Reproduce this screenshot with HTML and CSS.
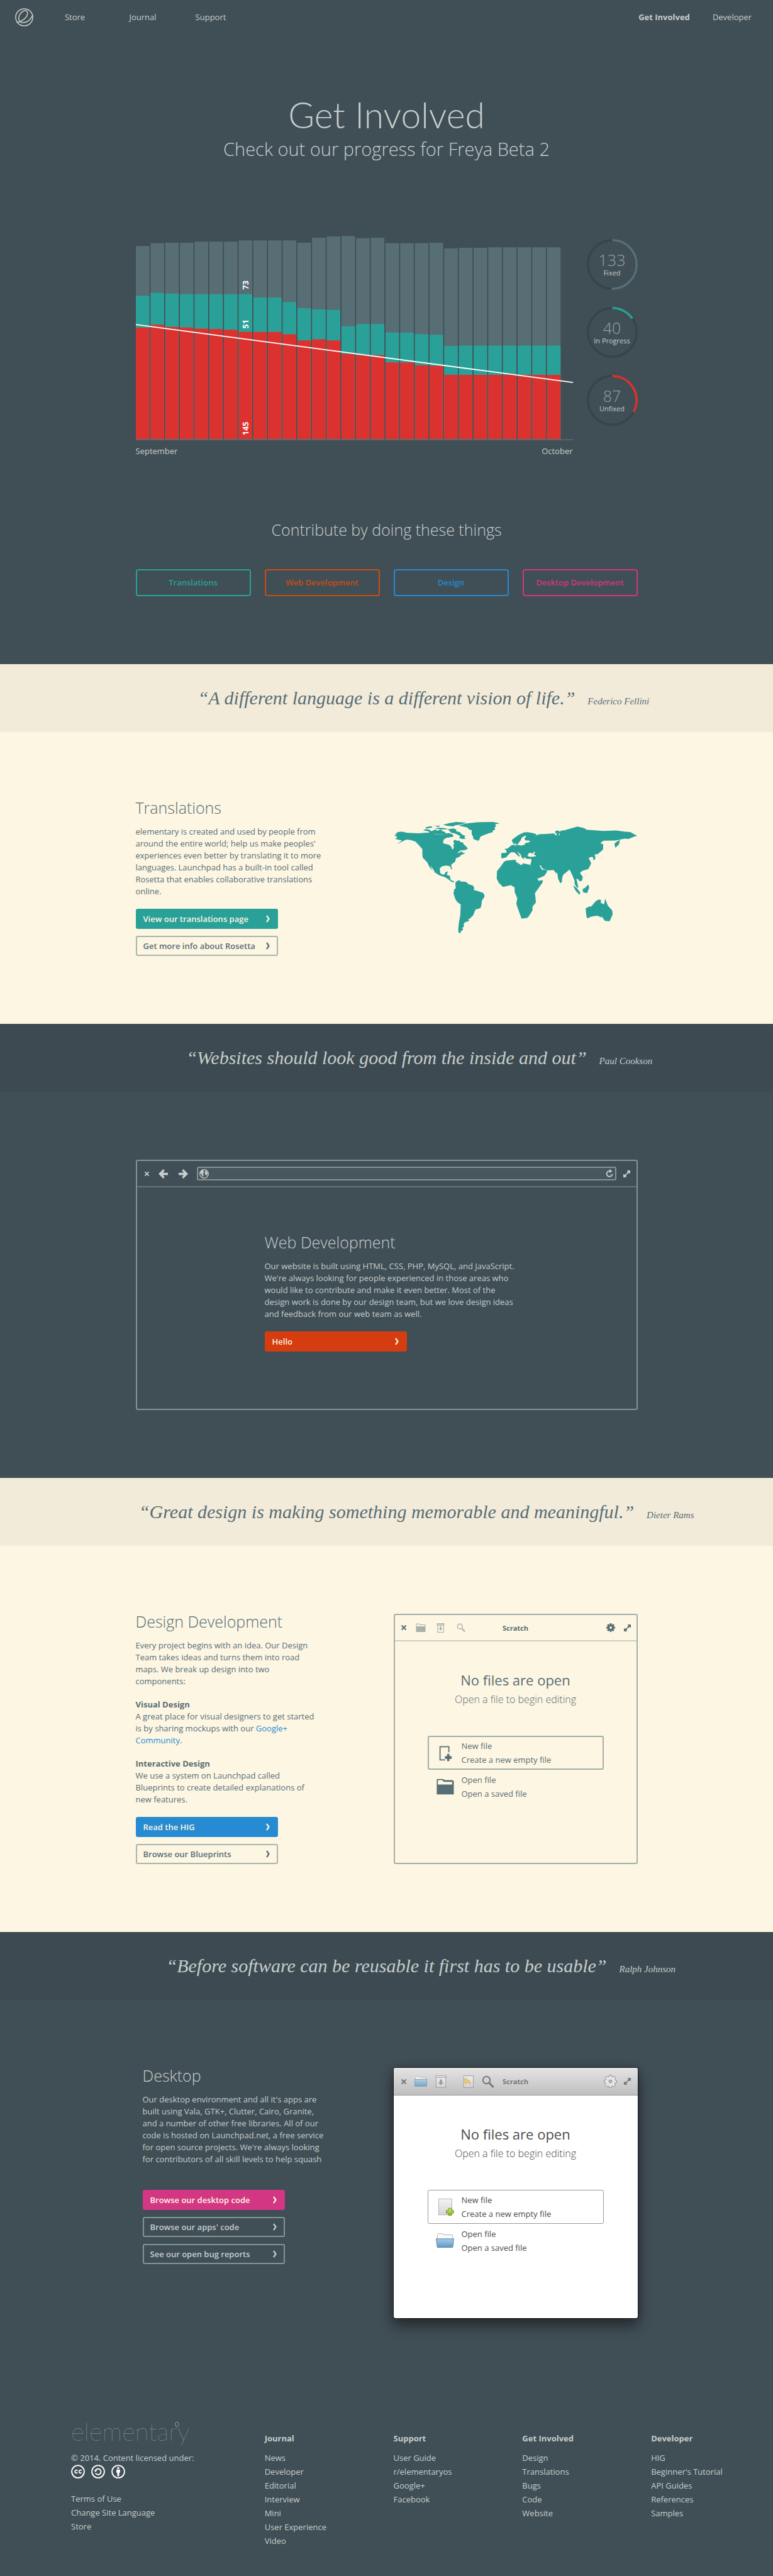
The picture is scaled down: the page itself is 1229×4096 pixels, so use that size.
FILE: index.html
```html
<!DOCTYPE html>
<html lang="en">
<head>
<meta charset="utf-8">
<meta name="viewport" content="width=device-width, initial-scale=1">
<title>Get Involved - elementary</title>
<link rel="stylesheet" href="styles.css">
</head>
<body>
<svg class="sprite" aria-hidden="true">
  <symbol id="chevron" viewBox="0 0 8 12"><path d="M2 1l3.500 5L2 11" fill="none" stroke="currentColor" stroke-width="2.200"/></symbol>
  <symbol id="close" viewBox="0 0 10 10"><path d="M1.500 1.500l7 7M8.500 1.500l-7 7" stroke="currentColor" stroke-width="2" fill="none"/></symbol>
  <symbol id="expand" viewBox="0 0 12 12"><path d="M6 0h6v6L10 4 7.500 6.500 5.500 4.500 8 2zM0 12V6l2 2 2.500-2.500 2 2L4 10l2 2z" fill="currentColor"/></symbol>
  <symbol id="arrow" viewBox="0 0 16 16"><path d="M0 8l8-8 2.500 2.500L7.500 6H16v4H7.500l3 3.500L8 16z" fill="currentColor"/></symbol>
  <symbol id="globe" viewBox="0 0 16 16"><circle cx="8" cy="8" r="7.300" fill="none" stroke="currentColor" stroke-width="1.400"/><path d="M2 4l3-2.500L8 3 6.500 5 8 6.500 5.500 8 7.500 10l-2 3.500L4 9 1.500 7zM10 2.500l3 1.500 1 4-2 3.500-2-3L9 6z" fill="currentColor"/></symbol>
  <symbol id="reload" viewBox="0 0 16 16"><path d="M8 3.500a5 5 0 1 0 5 5.500" fill="none" stroke="currentColor" stroke-width="2.200"/><path d="M8 0l5 3.700-5 3.500z" fill="currentColor"/></symbol>
  <symbol id="folder" viewBox="0 0 32 28"><path d="M1 28V1h10l2 3h18v24z" fill="currentColor"/><path d="M3 10V3h7l2 3h17v4z" class="paper"/></symbol>
  <symbol id="save" viewBox="0 0 16 20"><path d="M0 0h16v4h-1v16H1V4H0zM1.500 1.500v1h13v-1zM2.500 4.500v14h11v-14z" fill="currentColor" fill-rule="evenodd"/><path d="M6.500 6h3v5H12l-4 4.500L4 11h2.500z" fill="currentColor"/></symbol>
  <symbol id="search" viewBox="0 0 20 20"><circle cx="7.500" cy="7.500" r="5.700" fill="none" stroke="currentColor" stroke-width="2"/><path d="M11.500 11.500L18.500 19" stroke="currentColor" stroke-width="3"/></symbol>
  <symbol id="gear" viewBox="0 0 20 20"><circle cx="10" cy="10" r="5.200" fill="none" stroke="currentColor" stroke-width="5"/><path d="M10 0v4M10 16v4M0 10h4M16 10h4M3 3l3 3M14 14l3 3M17 3l-3 3M6 14l-3 3" stroke="currentColor" stroke-width="4"/></symbol>
</svg>

<header class="topbar">
  <a class="logo" href="#" aria-label="elementary">
    <svg viewBox="48 42 96 96" width="29" height="29"><g fill="none" stroke="currentColor" stroke-width="5"><circle cx="96" cy="90" r="45"/><path d="M56 117C86 114 118 87 113 64C109 49 88 53 75 72C60 95 68 119 92 118C115 116 132 99 141 78"/></g></svg>
  </a>
  <nav class="topnav" aria-label="Main"><a href="#">Store</a><a href="#">Journal</a><a href="#">Support</a></nav>
  <nav class="topnav topnav-end" aria-label="Community"><a href="#" class="current">Get Involved</a><a href="#">Developer</a></nav>
</header>

<main>
<section class="hero wrap">
  <h1>Get Involved</h1>
  <p class="lead">Check out our progress for Freya Beta 2</p>
  <div class="progress">
    <div class="chart">
      <svg viewBox="240 410 774 370" role="img" aria-label="Bugs fixed, in progress and unfixed per day">
        <g fill="none" stroke-width="24">
          <path stroke="#586e75" d="M252 436V778M278 431V778M304 430V778M330 430V778M356 428V778M382 428V778M408 428V778M434 426V778M460 426V778M486 426V778M512 426V778M538 430V778M564 421V778M590 419V778M616 418V778M642 422V778M668 421V778M694 431V778M720 431V778M746 431V778M772 430V778M798 440V778M824 439V778M850 439V778M876 438V778M902 438V778M928 438V778M954 438V778M980 438V778"/>
          <path stroke="#2aa198" d="M252 524V778M278 519V778M304 520V778M330 521V778M356 521V778M382 521V778M408 521V778M434 521V778M460 527V778M486 527V778M512 535V778M538 546V778M564 548V778M590 549V778M616 578V778M642 574V778M668 574V778M694 589V778M720 589V778M746 592V778M772 593V778M798 613V778M824 612V778M850 612V778M876 612V778M902 612V778M928 612V778M954 612V778M980 612V778"/>
          <path stroke="#dc322f" d="M252 580V778M278 575V778M304 579V778M330 580V778M356 582V778M382 583V778M408 584V778M434 588V778M460 588V778M486 588V778M512 592V778M538 603V778M564 601V778M590 603V778M616 627V778M642 629V778M668 629V778M694 642V778M720 642V778M746 647V778M772 648V778M798 664V778M824 664V778M850 664V778M876 664V778M902 664V778M928 664V778M954 664V778M980 664V778"/>
        </g>
        <path d="M240 575L1014 677.500" stroke="#fff" stroke-width="2"/>
        <path d="M240 779H1014" stroke="#586e75" stroke-width="2"/>
        <g class="bar-value">
          <text transform="translate(439 513) rotate(-90)">73</text>
          <text transform="translate(439 582) rotate(-90)">51</text>
          <text transform="translate(439 771) rotate(-90)">145</text>
        </g>
      </svg>
      <div class="axis"><span>September</span><span>October</span></div>
    </div>
    <div class="rings">
      <div class="ring"><svg viewBox="0 0 90 90"><circle cx="45" cy="45" r="43"/><circle class="arc" cx="45" cy="45" r="43" pathLength="100" stroke-dasharray="50.500 100"/></svg><strong>133</strong><span>Fixed</span></div>
      <div class="ring"><svg viewBox="0 0 90 90"><circle cx="45" cy="45" r="43"/><circle class="arc" cx="45" cy="45" r="43" pathLength="100" stroke-dasharray="15.400 100"/></svg><strong>40</strong><span>In Progress</span></div>
      <div class="ring"><svg viewBox="0 0 90 90"><circle cx="45" cy="45" r="43"/><circle class="arc" cx="45" cy="45" r="43" pathLength="100" stroke-dasharray="33 100"/></svg><strong>87</strong><span>Unfixed</span></div>
    </div>
  </div>
  <h2 class="contribute">Contribute by doing these things</h2>
  <nav class="jump" aria-label="Ways to contribute">
    <a class="teal" href="#translations">Translations</a>
    <a class="orange" href="#web">Web Development</a>
    <a class="blue" href="#design">Design</a>
    <a class="pink" href="#desktop">Desktop Development</a>
  </nav>
</section>

<blockquote class="quote light"><p>“A different language is a different vision of life.”</p><cite>Federico Fellini</cite></blockquote>
<section class="panel light" id="translations">
  <div class="wrap split">
    <div class="copy">
      <h2>Translations</h2>
      <p>elementary is created and used by people from around the entire world; help us make peoples' experiences even better by translating it to more languages. Launchpad has a built-in tool called Rosetta that enables collaborative translations online.</p>
      <div class="actions">
        <a class="btn solid teal" href="#">View our translations page<svg><use href="#chevron"/></svg></a>
        <a class="btn" href="#">Get more info about Rosetta<svg><use href="#chevron"/></svg></a>
      </div>
    </div>
    <svg class="map" viewBox="18 24 1296 604" role="img" aria-label="World map" fill="#2aa198" fill-rule="evenodd">
      <path d="M20 95l18-5-6-4 28-4 30 6 60 3 30-3 35-1 25 9 50-1 20-6 20 8 6 8-6 5-32 5-14 8-5 15 6 8 25 5 14 11 3 12 6 2 4-12-3-10 5-8-5-13 7-8 15 6 8-3 8 9 14 3 4 10 10 8 11 13-6 6-13 3-20 2-15 12 5 2 18-10 4 8 14 3-24 10-6 8-20 9-4 18-20 14 0 12 5 14-5 0-8-17-20-3-22 4-12 12 3 25 15 8 10-5 3-10 12-2-5 18 17 5 1 18 13 10 8-2-4 9-10-4-15-12-20-12-30-10-25-16-4-12-20-25 8 18 7 13-18-22-12-25-24-25-2-18 0-26-6-8-30-33-25-8-25-3-50 25 28-20-36-8 12-10-16-7 12-7z"/>
      <path d="M185 60l30-8 10 8-34 6zM174 75l12-6 20 2 12 9 20-9 12 6 20-7 4 8 16 5 4 8 16 1-15 5-30-2-20 0-25-3-10-2-6-9zM280 46l30-9 40-6 54 3-30 10-30 4-10 6-34-3zM235 52l30-3-10 8zM235 66l25-5 30 3 20 4-30 3zM306 70l28-5 18 6-4 8 20 5 14 14 18 7-8 5 8 10-18 1-18-6 8-8-12-8-20-8-16-3zM363 50l37-11 60-7 85-1 36 6-24 6 4 12-8 6 4 10-12 5-2 9-18 5-18 7-14 5-14 6-9 22-12-2-18-8 0-10-8-14 0-22-12-2-12-12z"/>
      <path d="M345 352l10-8 13-4 4 6 30 3 15 13 22 6 7 14-4 10 10 2 38 12 9 10 1 12-14 20-2 20-4 18-10 5-18 5-4 10-8 20-20 20-6-1 4 12-20 6-8 7 0 18-8 5 5 10-10 6-6 13-10-5 0-24 4-34 6-30 3-60-18-12-10-15-11-32 4-20 8-8z"/>
      <path d="M645 126l35-26 30-14 20-1 25 4 22 7-8 7 25-8 20 0 50-3 14 2-2-16 14-2 8 6 14-6 12-1 70-20 38 9 8 8 90 6 70-2 40 6 34 2 37 20-18 5-28 12-20-2-50 10-63 1-17 13 16 7-2 28-26 22-19 4 5 12-2 14-10 2 0-14-12-2-12 8 10 16 3 12-14 28-33 10-12 12 15 20-4 20-12 4-10-12-8-2 6 26 5 22-8-2-12-17-1-20-12-28-14-30-10 8-24 20-6 18 0 18-9 10-12-25-5-32-6 4-12-18-30 2-20-4-14-10-4-12-8 0 8 14 8 10 12-6 14 12-16 24-30 14-12 3-33-70 4-18 3-17-28-2-10-10-3 13-12-10-5-16-20-16 16 24-4 4-27-24-18 2-14 14-10 12-18 5-8-2 0-26 28-2-1-12-10-8 18-3 18-16 20-6-10-5-4-8zM728 211l8-16 14-1 2 7 14-15 2 9-8 5 16 12-20 3-14 1z"/>
      <path class="sea" d="M658 157l4-12 6-6-4 12 10 1 18-24 6-14 16-10 8 2-10 14 6 8 24 2-4 8-20 4-6 10-16 4-18-3zM872 97l12-8-2 14zM892 99l8-10-2 13z"/>
      <path d="M605 240l15-5 45-4 3 12 28 17 8-10 38 8 10 22 27 45 7 18 25-3-4 14-39 55 3 25 2 24-18 22 0 20-16 26-10 13-32 5-12-32-16-46 5-30-14-34 0-24-20-12-42 10-22-22-11-22 1-40 20-25zM1190 146l12-10 18-11-6 25-19 18zM970 367l18 12 20 26-3 12-20-20zM1020 388l15-8 16-18 5 18-11 28-20-3zM1037 490l14-8 17-4 22-26 15-10 15 4-3 14 18 8 6-30 14 37 23 25 3 20-16 38-25-2-12-15-4-8-4 5-20-10-30 5-25 10-4-15z"/>
    </svg>
  </div>
</section>

<blockquote class="quote dark"><p>“Websites should look good from the inside and out”</p><cite>Paul Cookson</cite></blockquote>
<section class="panel dark" id="web">
  <div class="wrap">
    <div class="window browser">
      <div class="toolbar">
        <button class="tool small" aria-label="Close"><svg width="9" height="9"><use href="#close"/></svg></button>
        <button class="tool" aria-label="Back"><svg width="17" height="15"><use href="#arrow"/></svg></button>
        <button class="tool" aria-label="Forward"><svg class="flip" width="17" height="15"><use href="#arrow"/></svg></button>
        <label class="address"><svg width="15" height="15"><use href="#globe"/></svg><input type="text" aria-label="Address"><svg width="14" height="14"><use href="#reload"/></svg></label>
        <button class="tool small" aria-label="Maximize"><svg width="11" height="11"><use href="#expand"/></svg></button>
      </div>
      <div class="page">
        <h2>Web Development</h2>
        <p>Our website is built using HTML, CSS, PHP, MySQL, and JavaScript. We're always looking for people experienced in those areas who would like to contribute and make it even better. Most of the design work is done by our design team, but we love design ideas and feedback from our web team as well.</p>
        <div class="actions"><a class="btn solid orange" href="#">Hello<svg><use href="#chevron"/></svg></a></div>
      </div>
    </div>
  </div>
</section>

<blockquote class="quote light"><p>“Great design is making something memorable and meaningful.”</p><cite>Dieter Rams</cite></blockquote>
<section class="panel light" id="design">
  <div class="wrap split">
    <div class="copy narrow">
      <h2>Design Development</h2>
      <p>Every project begins with an idea. Our Design Team takes ideas and turns them into road maps. We break up design into two components:</p>
      <h3>Visual Design</h3>
      <p>A great place for visual designers to get started is by sharing mockups with our <a href="#">Google+ Community</a>.</p>
      <h3>Interactive Design</h3>
      <p>We use a system on Launchpad called Blueprints to create detailed explanations of new features.</p>
      <div class="actions">
        <a class="btn solid blue" href="#">Read the HIG<svg><use href="#chevron"/></svg></a>
        <a class="btn" href="#">Browse our Blueprints<svg><use href="#chevron"/></svg></a>
      </div>
    </div>
    <div class="window wire">
      <div class="toolbar titled">
        <div class="tools">
          <button class="tool small" aria-label="Close"><svg width="10" height="10"><use href="#close"/></svg></button>
          <button class="tool faded" aria-label="Open"><svg width="16" height="14"><use href="#folder"/></svg></button>
          <button class="tool faded" aria-label="Save"><svg width="13" height="15"><use href="#save"/></svg></button>
          <button class="tool faded" aria-label="Find"><svg width="14" height="14"><use href="#search"/></svg></button>
        </div>
        <span class="title">Scratch</span>
        <div class="tools end">
          <button class="tool" aria-label="Settings"><svg width="14" height="14"><use href="#gear"/></svg></button>
          <button class="tool small" aria-label="Maximize"><svg width="11" height="11"><use href="#expand"/></svg></button>
        </div>
      </div>
      <div class="welcome">
        <h3>No files are open</h3>
        <p>Open a file to begin editing</p>
        <button class="choice first"><svg viewBox="0 0 32 32"><path d="M23 15V5H7v24h9" fill="none" stroke="currentColor" stroke-width="2"/><path d="M20 18h4v4h4v5h-4v4h-4v-4h-4v-5h4z" fill="currentColor"/></svg><span>New file</span><span>Create a new empty file</span></button>
        <button class="choice"><svg viewBox="0 0 32 32"><path d="M1 30V4q0-2 2-2h9q2 0 3 2h14q3 0 3 3v23z" fill="currentColor"/><path d="M3 12V5l1-1h7l3 3h15v5z" class="paper"/></svg><span>Open file</span><span>Open a saved file</span></button>
      </div>
    </div>
  </div>
</section>

<blockquote class="quote dark"><p>“Before software can be reusable it first has to be usable”</p><cite>Ralph Johnson</cite></blockquote>
<section class="panel dark" id="desktop">
  <div class="wrap split">
    <div class="copy inset">
      <h2>Desktop</h2>
      <p>Our desktop environment and all it's apps are built using Vala, GTK+, Clutter, Cairo, Granite, and a number of other free libraries. All of our code is hosted on Launchpad.net, a free service for open source projects. We're always looking for contributors of all skill levels to help squash</p>
      <div class="actions">
        <a class="btn solid pink" href="#">Browse our desktop code<svg><use href="#chevron"/></svg></a>
        <a class="btn" href="#">Browse our apps' code<svg><use href="#chevron"/></svg></a>
        <a class="btn" href="#">See our open bug reports<svg><use href="#chevron"/></svg></a>
      </div>
    </div>
    <div class="window native">
      <svg class="sprite" aria-hidden="true"><defs>
        <linearGradient id="gBlue" x2="0" y2="1"><stop offset="0" stop-color="#a9cbe4"/><stop offset="1" stop-color="#5b9bc9"/></linearGradient>
        <linearGradient id="gGray" x2="0" y2="1"><stop offset="0" stop-color="#f4f4f4"/><stop offset="1" stop-color="#d6d6d6"/></linearGradient>
        <linearGradient id="gGreen" x2="0" y2="1"><stop offset="0" stop-color="#d9f06a"/><stop offset="1" stop-color="#7db71c"/></linearGradient>
        <symbol id="folder-color" viewBox="0 0 32 26"><path d="M2.500 10V3q0-1 1-1h0q0-1.500 1.500-1.500h7q1.500 0 1.500 2h15q1 0 1 1V10" fill="#fafafa" stroke="#b0b0b0"/><path d="M.5 9.500h31L29.500 24.500h-27z" fill="url(#gBlue)" stroke="#4f7f9f"/></symbol>
      </defs></svg>
      <div class="toolbar titled">
        <div class="tools">
          <button class="tool small" aria-label="Close"><svg width="10" height="10"><use href="#close"/></svg></button>
          <button class="tool pale" aria-label="Open"><svg width="20" height="17" viewBox="0 0 22 18"><path d="M1.500 6V2.500l1-2h6l1 1.500h11V6" fill="#fafafa" stroke="#aaa"/><path d="M.5 5.500h21v12H.5z" fill="url(#gBlue)" stroke="#5e87a3"/></svg></button>
          <button class="tool pale" aria-label="Save"><svg width="18" height="20" viewBox="0 0 20 22"><path d="M1.500 3.500h17v18h-17z" fill="url(#gGray)" stroke="#888"/><path d="M.5.5h19v3H.5z" fill="#eee" stroke="#888"/><path d="M8 7h4v5h3l-5 5-5-5h3z" fill="#8a8a8a"/></svg></button>
          <button class="tool pale apart" aria-label="Revert"><svg width="18" height="20" viewBox="0 0 20 22"><path d="M2.500.5h17v21h-17z" fill="url(#gGray)" stroke="#888"/><path d="M.7 9.500L7 4v3.500c6 0 8 3 7 9.500-1-4-3-5-7-4.500V15z" fill="#f3c65a" stroke="#c89a3c" stroke-width=".8"/></svg></button>
          <button class="tool" aria-label="Find"><svg width="20" height="20"><use href="#search"/></svg></button>
        </div>
        <span class="title">Scratch</span>
        <div class="tools end">
          <button class="tool" aria-label="Settings"><svg width="21" height="21" viewBox="0 0 22 22"><path d="M9 .7h4l.5 2.500 1.700.8 2.400-1.500 2.400 2.600L18.500 7.500l.5 1.500 2.300.5v3.500l-2.500.7-.8 1.600 1.500 2.400-2.600 2.300-2.300-1.400-1.600.7-.5 2H9l-.6-2.300-1.500-.6-2.400 1.400L2 17.500l1.400-2.300-.7-1.600L.7 13V9.500L3 9l.7-1.700L2.300 5l2.500-2.500 2.200 1.400 1.500-.6z" fill="#e6e6e6" stroke="#888"/><circle cx="11" cy="11" r="2.500" fill="#bbb" stroke="#888"/></svg></button>
          <button class="tool small" aria-label="Maximize"><svg width="11" height="11"><use href="#expand"/></svg></button>
        </div>
      </div>
      <div class="welcome">
        <h3>No files are open</h3>
        <p>Open a file to begin editing</p>
        <button class="choice first"><svg viewBox="0 0 32 32"><path d="M4.500 1.500h24v29h-24z" fill="url(#gGray)" stroke="#aaa"/><path d="M22.500 18.500h5v4h4v5h-4v4h-5v-4h-4v-5h4z" fill="url(#gGreen)" stroke="#568a0e"/></svg><span>New file</span><span>Create a new empty file</span></button>
        <button class="choice"><svg><use href="#folder-color"/></svg><span>Open file</span><span>Open a saved file</span></button>
      </div>
    </div>
  </div>
</section>
</main>

<footer class="footer">
  <div class="about">
    <p class="wordmark">elementary<svg viewBox="0 0 8 10"><path d="M4 9C1 8 1 1 4.500 1S8 7 4 9" fill="none" stroke="currentColor"/></svg></p>
    <p>© 2014. Content licensed under:</p>
    <p class="cc">
      <svg viewBox="0 0 24 24"><circle cx="12" cy="12" r="10.800"/><path d="M11.200 10.200a2.600 2.600 0 1 0 0 3.600M18.200 10.200a2.600 2.600 0 1 0 0 3.600"/></svg>
      <svg viewBox="0 0 24 24"><circle cx="12" cy="12" r="10.800"/><path d="M7.500 10a5 5 0 1 1 0 4.500"/><path class="fill" d="M4.800 9.500h5.400L7.500 13z"/></svg>
      <svg viewBox="0 0 24 24"><circle cx="12" cy="12" r="10.800"/><circle class="fill" cx="12" cy="5.700" r="1.900"/><path class="fill" d="M8.800 8.500h6.400V14h-1.500v6h-3.400v-6H8.800z"/></svg>
    </p>
    <ul><li><a href="#">Terms of Use</a></li><li><a href="#">Change Site Language</a></li><li><a href="#">Store</a></li></ul>
  </div>
  <nav aria-labelledby="f1"><h4 id="f1">Journal</h4><ul><li><a href="#">News</a></li><li><a href="#">Developer</a></li><li><a href="#">Editorial</a></li><li><a href="#">Interview</a></li><li><a href="#">Mini</a></li><li><a href="#">User Experience</a></li><li><a href="#">Video</a></li></ul></nav>
  <nav aria-labelledby="f2"><h4 id="f2">Support</h4><ul><li><a href="#">User Guide</a></li><li><a href="#">r/elementaryos</a></li><li><a href="#">Google+</a></li><li><a href="#">Facebook</a></li></ul></nav>
  <nav aria-labelledby="f3"><h4 id="f3">Get Involved</h4><ul><li><a href="#">Design</a></li><li><a href="#">Translations</a></li><li><a href="#">Bugs</a></li><li><a href="#">Code</a></li><li><a href="#">Website</a></li></ul></nav>
  <nav aria-labelledby="f4"><h4 id="f4">Developer</h4><ul><li><a href="#">HIG</a></li><li><a href="#">Beginner's Tutorial</a></li><li><a href="#">API Guides</a></li><li><a href="#">References</a></li><li><a href="#">Samples</a></li></ul></nav>
</footer>
</body>
</html>
```

FILE: styles.css
```css
* { box-sizing: border-box; }

body {
  margin: 0;
  background: #404e55;
  color: #c6cdcb;
  font: 13px/19px "Open Sans", sans-serif;
}

h1, h2, h3, h4, p, ul, blockquote { margin: 0; padding: 0; }
ul { list-style: none; }
a { color: inherit; text-decoration: none; }
svg { display: block; flex: none; }
button {
  border: 0;
  padding: 0;
  background: none;
  color: inherit;
  font: inherit;
}

.sprite { position: absolute; width: 0; height: 0; }
.wrap { max-width: 798px; margin: 0 auto; }

h2 {
  font-size: 25px;
  line-height: 24px;
  font-weight: 300;
}

/* Top bar */
.topbar {
  display: flex;
  height: 54px;
  padding: 0 11px;
  line-height: 54px;
}
.logo {
  display: grid;
  place-items: center;
  width: 54px;
}
.topnav { display: flex; }
.topnav a { width: 108px; text-align: center; }
.topnav-end { margin-left: auto; }
.current { font-weight: 700; }

/* Hero */
.hero { padding: 96px 0 108px; text-align: center; }
h1 {
  font: 300 57px/64px Lato, sans-serif;
}
.lead {
  margin-top: 3px;
  font-size: 29px;
  line-height: 40px;
  font-weight: 300;
}
.progress {
  display: flex;
  gap: 22px;
  margin-top: 111px;
}
.chart { flex: 1; }
.chart svg { width: 100%; }
.bar-value {
  fill: #fff;
  font-size: 14px;
  font-weight: 700;
}
.axis {
  display: flex;
  justify-content: space-between;
  margin-top: 8px;
}
.rings {
  display: flex;
  flex-direction: column;
  gap: 27px;
  padding-top: 12px;
}
.ring {
  position: relative;
  width: 81px;
  height: 81px;
  padding-top: 20px;
}
.ring svg { position: absolute; inset: 0; }
.ring circle { fill: none; stroke: #37444b; stroke-width: 4; }
.ring .arc { transform: rotate(-90deg); transform-origin: center; }
.ring:nth-child(1) .arc { stroke: #586e75; }
.ring:nth-child(2) .arc { stroke: #2aa198; }
.ring:nth-child(3) .arc { stroke: #dc322f; }
.ring strong {
  display: block;
  color: #93a1a1;
  font-size: 25px;
  line-height: 26px;
  font-weight: 300;
}
.ring span { display: block; font-size: 11px; line-height: 15px; }
.contribute { margin-top: 98px; line-height: 34px; }
.jump {
  display: grid;
  grid-template-columns: repeat(4, 1fr);
  gap: 22px;
  margin-top: 46px;
}
.jump a {
  border: 2px solid;
  border-radius: 4px;
  line-height: 39px;
  font-weight: 600;
}
.teal { color: #2aa198; }
.orange { color: #cb4b16; }
.blue { color: #268bd2; }
.pink { color: #d33682; }

/* Quote bands */
.quote {
  display: grid;
  grid-template-columns: 1fr auto 1fr;
  align-items: baseline;
  column-gap: 20px;
  height: 108px;
  font: italic 30px/108px Satisfy, "Liberation Serif", serif;
}
.quote p { grid-column: 2; white-space: nowrap; }
.quote cite { font-size: 15px; white-space: nowrap; }
.quote.light { background: #f3ebda; color: #586e75; }
.quote.dark { background: #3d4a51; }

/* Panels */
.panel { padding: 108px 0; }
.panel.light { background: #fdf6e3; color: #586e75; }
.split {
  display: grid;
  grid-template-columns: 1fr 1fr;
  column-gap: 22px;
}
.copy { max-width: 298px; }
.copy.narrow { max-width: 288px; }
.copy.inset { margin-left: 11px; max-width: 290px; }
.copy h2, .page h2 { margin-bottom: 17px; }
.copy h3 { margin-top: 18px; font-size: 13px; line-height: 19px; font-weight: 700; }
.copy p a { color: #268bd2; }
.actions { display: grid; gap: 11px; width: 226px; margin-top: 18px; }
.inset .actions { margin-top: 39px; }

.btn {
  display: flex;
  align-items: center;
  justify-content: space-between;
  height: 32px;
  padding: 0 10px;
  border: 2px solid #a9b5ad;
  border-radius: 3px;
  font-weight: 600;
}
.dark .btn { border-color: #839496; }
.btn svg { width: 8px; height: 12px; }
.btn.solid { color: #fdf6e3; }
.btn.solid.teal { background: #2aa198; border-color: #2aa198; }
.btn.solid.orange { background: #d53c10; border-color: #d53c10; }
.btn.solid.blue { background: #268bd2; border-color: #268bd2; }
.btn.solid.pink { background: #d33682; border-color: #d33682; }

.map { width: 100%; margin-top: 33px; }
.sea, .paper { fill: #fdf6e3; }

/* Application windows */
.window {
  min-height: 398px;
  border: 2px solid #a2afa9;
  border-radius: 3px;
}
.browser { border-color: #839496; }
.toolbar {
  display: flex;
  align-items: center;
  height: 42px;
  padding: 0 4px;
  border-bottom: 2px solid #cfd0c1;
}
.browser .toolbar { border-color: #65757b; padding: 0 5px; }
.titled {
  display: grid;
  grid-template-columns: 1fr auto 1fr;
}
.tools { display: flex; }
.tools.end { justify-content: flex-end; }
.tool {
  display: grid;
  place-items: center;
  width: 32px;
  height: 32px;
}
.tool.small { width: 21px; }
.faded { opacity: .5; }
.title { font-weight: 700; font-size: 11px; }
.flip { transform: scaleX(-1); }
.address {
  display: flex;
  flex: 1;
  align-items: center;
  height: 22px;
  margin: 0 6px 0 5px;
  padding: 0 2px;
  border: 2px solid #839496;
  border-radius: 3px;
  background: #48575e;
}
.address input {
  flex: 1;
  min-width: 0;
  border: 0;
  background: none;
  color: inherit;
  font: inherit;
}
.page { max-width: 400px; margin: 75px auto 0 203px; }

.welcome {
  display: flex;
  flex-direction: column;
  align-items: center;
  padding-top: 46px;
}
.welcome h3 { font-size: 22px; line-height: 30px; font-weight: 400; }
.welcome p {
  margin: 5px 0 47px;
  font-size: 16px;
  line-height: 22px;
  font-weight: 300;
}
.choice {
  display: grid;
  grid-template-columns: 52px 1fr;
  align-items: center;
  width: 280px;
  padding: 3px 0;
  border: 2px solid transparent;
  border-radius: 3px;
  line-height: 22px;
  text-align: left;
}
.choice.first { border-color: #a2afa9; }
.choice svg { grid-row: 1 / 3; width: 29px; height: 28px; justify-self: center; }
.choice span { grid-column: 2; }

.native {
  border: 0;
  background: #fff;
  color: #4d4d4d;
  box-shadow: 0 0 0 1px rgba(0, 0, 0, .5), 0 12px 22px rgba(0, 0, 0, .45), 0 0 14px rgba(0, 0, 0, .2);
}
.native .toolbar {
  height: 44px;
  padding: 0 6px;
  border-bottom: 1px solid #999;
  border-radius: 3px 3px 0 0;
  background: linear-gradient(#e4e4e4, #bfbfbf);
  color: #777;
}
.pale { opacity: .75; }
.apart { margin-left: 11px; }
.native .choice { padding: 4px 1px; border-width: 1px; }
.native .choice.first { border-color: #999; }

/* Footer */
.footer {
  display: grid;
  grid-template-columns: repeat(6, 1fr);
  column-gap: 22px;
  padding: 72px 11px 80px;
  line-height: 22px;
}
.about { grid-column: span 2; padding-left: 102px; }
.footer h4 { margin: 0 0 9px; font-size: 13px; font-weight: 700; }
.wordmark {
  position: relative;
  width: 184px;
  height: 47px;
  margin-top: -16px;
  color: #9aa6a8;
  font: 100 40px/32px Lato, sans-serif;
}
.wordmark svg {
  position: absolute;
  top: 0;
  right: 12px;
  width: 8px;
  height: 10px;
}
.cc { display: flex; gap: 10px; margin-bottom: 21px; }
.cc svg { width: 22px; height: 22px; fill: none; stroke: #fff; stroke-width: 2; }
.cc .fill { fill: #fff; stroke: none; }
```
